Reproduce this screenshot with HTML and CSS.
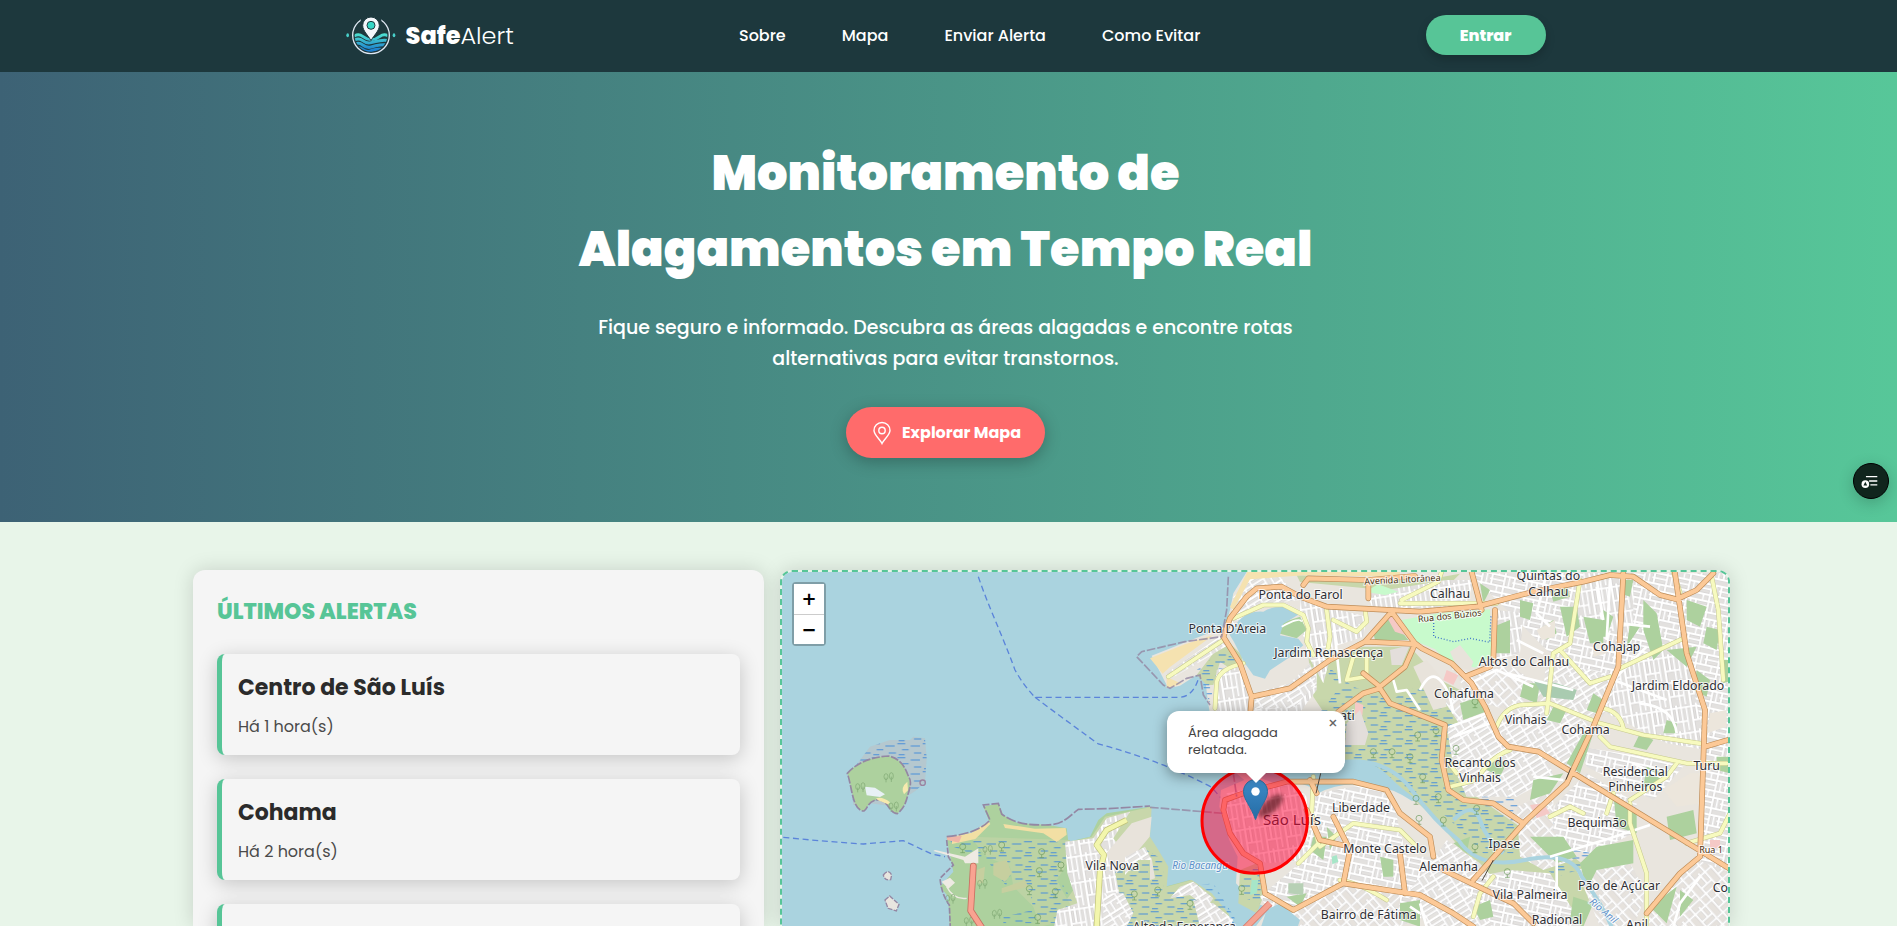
FILE: index.html
```html
<!DOCTYPE html>
<html lang="pt-BR">
<head>
<meta charset="utf-8">
<meta name="viewport" content="width=device-width, initial-scale=1">
<title>SafeAlert</title>
<link rel="stylesheet" href="styles.css">
</head>
<body>
<header class="topbar">
  <div class="topbar-inner">
    <a class="brand" href="#">
      <svg class="brand-icon" viewBox="0 0 150 120" aria-hidden="true">
        <defs>
          <linearGradient id="wave" x1="0" y1="55" x2="0" y2="105" gradientUnits="userSpaceOnUse"><stop offset="0" stop-color="#4fe3d0"/><stop offset="1" stop-color="#1c7fd0"/></linearGradient>
          <clipPath id="disc"><circle cx="75" cy="61" r="49"/></clipPath>
        </defs>
        <circle cx="75" cy="61" r="55" fill="none" stroke="#dfe8f3" stroke-width="4"/>
        <path d="M44 0h62v26H44z" fill="#1d383d"/>
        <g clip-path="url(#disc)" fill="none" stroke="url(#wave)" stroke-width="9">
          <path d="M24 64q13-10 26 0t26 10 26-10 26 0"/>
          <path d="M24 77q13-10 26 0t26 6 26-6 26 0"/>
          <path d="M24 90q13-10 26 0t26 6 26-6 26 0"/>
          <path d="M24 103q13-10 26 0t26 4 26-4 26 0"/>
        </g>
        <path d="M75 77C66 60 50 48 50 31a25 25 0 0 1 50 0c0 17-16 29-25 46z" fill="#f4f7fb" stroke="#1d383d" stroke-width="3"/>
        <circle cx="75" cy="31" r="12" fill="#35d6c6" stroke="#1d383d" stroke-width="3"/>
        <ellipse cx="5" cy="61" rx="4" ry="6" fill="#48cfc9"/><ellipse cx="144" cy="61" rx="4" ry="6" fill="#48cfc9"/>
      </svg>
      <span class="brand-name"><b>Safe</b>Alert</span>
    </a>
    <nav class="nav">
      <a href="#">Sobre</a><a href="#">Mapa</a><a href="#">Enviar Alerta</a><a href="#">Como Evitar</a>
    </nav>
    <button class="login" type="button">Entrar</button>
  </div>
</header>

<section class="hero">
  <h1>Monitoramento de<br>Alagamentos em Tempo Real</h1>
  <p>Fique seguro e informado. Descubra as áreas alagadas e encontre rotas alternativas para evitar transtornos.</p>
  <button class="explore" type="button">
    <svg viewBox="0 0 24 24" width="24" height="24" fill="none" stroke="currentColor" stroke-width="1.4" aria-hidden="true"><path d="M12 22.500C10 18 4 14 4 9.500a8 8 0 0 1 16 0C20 14 14 18 12 22.500z"/><circle cx="12" cy="9.500" r="3.200"/></svg>
    Explorar Mapa
  </button>
</section>

<main class="content">
  <section class="alerts">
    <h2>ÚLTIMOS ALERTAS</h2>
    <article class="alert"><h3>Centro de São Luís</h3><p>Há 1 hora(s)</p></article>
    <article class="alert"><h3>Cohama</h3><p>Há 2 hora(s)</p></article>
    <article class="alert"></article>
  </section>

  <section class="map" aria-label="Mapa">
    <svg class="tiles" viewBox="36 36 2838 1062" preserveAspectRatio="xMinYMin slice">
      <defs>
        <path id="s1" d="M0 3h68M0 18h44M0 35h68M6 0v35M44 0v52M25 35v17M58 3v32"/>
        <path id="s2" d="M0 3h84M0 19h84M0 34h50M10 0v48M50 3v45M70 19v29"/>
        <path id="s3" d="M3 0v78M18 0v50M32 0v78M47 10v68M0 8h60M3 50h44"/>
        <path id="s4" d="M0 4h76M0 22h40M0 44h76M10 0v66M40 4v40M60 4v62"/>
        <pattern id="st1" width="68" height="52" patternUnits="userSpaceOnUse" patternTransform="rotate(12)"><rect width="68" height="52" fill="#e3e1df"/><use href="#s1" class="street-case"/><use href="#s1" class="street"/></pattern>
        <pattern id="st2" width="84" height="48" patternUnits="userSpaceOnUse" patternTransform="rotate(-32)"><rect width="84" height="48" fill="#e5e3e0"/><use href="#s2" class="street-case"/><use href="#s2" class="street"/></pattern>
        <pattern id="st3" width="60" height="78" patternUnits="userSpaceOnUse" patternTransform="rotate(-9)"><rect width="60" height="78" fill="#e2e0de"/><use href="#s3" class="street-case"/><use href="#s3" class="street"/></pattern>
        <pattern id="st4" width="76" height="66" patternUnits="userSpaceOnUse" patternTransform="rotate(48)"><rect width="76" height="66" fill="#e6e2dd"/><use href="#s4" class="street-case"/><use href="#s4" class="street"/></pattern>
        <pattern id="marsh" width="76" height="42" patternUnits="userSpaceOnUse"><path d="M2 5h24M42 12h28M16 23h20M52 33h22M6 38h18" stroke="#4a90d9" stroke-width="3"/></pattern>
        <filter id="soft" x="-50%" y="-100%" width="200%" height="300%"><feGaussianBlur stdDeviation="7"/></filter>
        <g id="tree" fill="none" stroke="#6d9a5e" stroke-width="2"><circle cx="0" cy="0" r="9"/><path d="M0 9v9M-7 18h14"/></g>
        <g id="pines" fill="none" stroke="#7fa873" stroke-width="2"><ellipse cx="-7" cy="0" rx="6" ry="9"/><ellipse cx="9" cy="-2" rx="6" ry="10"/><path d="M-7 3v14M9 0v16"/></g>
        <path id="secondary" d="M345 445l5-80q10-40 80-55M205 350l165-110M400 175l90-40 60 0 60 30 15 40-5 40 20 40M680 150l10 80-10 60M700 180l70 35 30-30-5-40M740 360l20-70 40-10 0 70-60 10M905 120l70-35 40-20 10-30M900 130l290 0M1440 60l-30 190-50 30-20 180M1380 270l90 100 60-20M1560 325l190-90M1720 36l20 60M1835 50l20 100 15 210M1190 500q20-55 70-65l90-5 150 60 130 35 170 25M1510 445q50 10 60 60M1500 530l30 30 230 50 120 0M1230 570q-60 20-100 90l-80 20M1040 600l30 40M1590 730l0 60 50 150 0 160M1590 720l110-70 30-40M1350 770l60-30 40 20M1520 760l20-60M860 1020q-80-50-140-60M640 650l-5 110 20 90-60 60M660 860l100-70 140 20 60 60M1120 1070l20-70 40-50M1890 760l-30 60-100 30"/>
        <path id="primary" d="M370 230l20-55 50-65 30-25 75-5 55 30 80 30 280 15 170-15 170-45 150-30 80-20 70 5 80 55 50 13 60-28 50-50M370 230l50 80 35 100 115-25 120-85 105-55 80-90 70 95 20 15 90 45 60 60 40 70 40 90 30 30 90 15 90 55 490 300M455 410l-5 60M795 245l150 7-30 68-75 60-50-40M610 75l15-20 180 5 140-12M805 70v45M715 455l75-55 50-15 30 45 90 35 75 30-10 105 20 90 45 30 90 10 90 60M1570 40l-15 280-75 180-80 170-120 110-80 90-80 90M1725 40l35 240 55 170-5 150-10 290-60 50-100 120M1815 560l75-22M1185 150l-5 150M1115 36l30 114M1095 350l75-30M370 750l5-30 55-20 130-35 80 0 120 0 100 25 40 70 90 70 10 60M370 750l20 70 40 60 50 30 15 90 85 50 150-80 20-100-50-100M620 750l40 90 90 20M730 970l230 35 100 55 60 40M900 880l15 120M1030 930l210 100 60 60M630 660l20 40"/>
      </defs>
      <rect width="2900" height="1120" fill="#aad3df"/>

      <!-- western islands and peninsula -->
      <path d="M240 640l60-80 60-20 60 0 10-10 35 5 5 60-5 70-25 25-30 20-30 30-80-10-50 5z" fill="#b9c3c8" opacity=".7"/>
      <path d="M240 640l60-80 60-20 60 0 10-10 35 5 5 60-5 70-25 25-30 20-30 30-80-10-50 5z" fill="url(#marsh)"/>
      <path d="M232 640c30-35 80-50 125-52 40 10 50 40 60 65q10 10-3 50c-5 20-10 40-32 58-25 0-25-40-60-42-30 5-30 30-40 34-35 0-35-70-50-113z" fill="#add19e" stroke="#9487a3" stroke-width="5" stroke-dasharray="24 5"/>
      <path d="M285 680l30 3 30 20-15 8-40-5z" fill="#e8f1f5"/><path d="M412 665q-22 18-10 38l12-12zM318 715q20-6 42 12l-6 6-30-12z" fill="#f6e9ae"/>
      <circle cx="458" cy="668" r="8" fill="none" stroke="#9b83a0" stroke-width="4"/>
      <use href="#pines" x="355" y="650"/><use href="#pines" x="270" y="680"/><use href="#pines" x="370" y="738"/>
      <path d="M340 945q15-20 25 0l-3 14q-18 4-22-14zM345 1020l14-12 28 25-8 20-25-8z" fill="#e8e5df" stroke="#9487a3" stroke-width="4" stroke-dasharray="14 4"/>
      <path d="M530 835l80-15 50-30-20-50 45-10 15 35 45 25 90 5 55 10 5 40 65-15 25-50 25-20 130-20-5 90 25 40 30 50-5 60 75-20 60 40 50 60 20 60H540l-5-110-25-30 40-45z" fill="#add19e"/>
      <path d="M885 850l80-20 40-60 140-30-5 90 25 40 30 50-5 60 75-20 60 40 50 60 20 60H850l10-60 50-70z" fill="#c8d7ab"/>
      <path d="M600 830l300 10 0 60-40 60 50 90-10 30-90 20-20-60-60-60-10-60-70-30z" fill="#bcd3a4"/>
      <path d="M540 840l360 0 0 60-40 40 50 90-40 60H700l0-20 90-20-10-60-70-10-60-80-100-40z" fill="url(#marsh)"/>
      <path d="M1080 840l100 60 0 90 150-20 80 130H1010l-10-150z" fill="url(#marsh)"/>
      <path d="M545 830l60-12 50-34 6 8-45 45-70 15zM700 792l95 14 92-2 3 20-30 22-40-26-115-16z" fill="#f2dfa4"/>
      <path d="M885 845l85-10 40-60 70-20-50 80 30 40-25 60 20 100-10 65H852l10-50 60-20-30-90z" fill="url(#st3)"/>
      <path d="M1085 790l60-20-6 60-50 60-50 50-30-60zM1120 890l20 10 0 60 15-5-10-60z" fill="#e8e3db"/>
      <path d="M1065 890l60-30 20 40-40 0-40 45zM1230 980l40-15 60 50-20 30-50-40-60 10zM1000 1000l60 0 30 60-20 40h-70zM1270 1020l60 10 60 50-10 20h-90z" fill="url(#st2)"/>
      <path d="M530 830l45-2-8 20-35-8z" fill="#efb5a8"/>
      <path d="M495 870l90 20 40-25 0 45-40 0-5-10-90-27zM515 965l25-12 15 15-20 18z" fill="#eeeae3"/>
      <path d="M530 980q20 40 60 35" fill="none" stroke="#eeeae3" stroke-width="4"/>
      <path d="M670 910l40-10 15 40-20 25-35-20zM695 985l70-25 10 20-80 20zM620 930l25-10-5 50-20 0z" fill="#c6cf9f"/>
      <g><use href="#tree" x="578" y="860"/><use href="#tree" x="695" y="855"/><use href="#tree" x="815" y="875"/><use href="#tree" x="808" y="932"/><use href="#tree" x="856" y="994"/><use href="#tree" x="778" y="986"/><use href="#tree" x="803" y="1072"/><use href="#tree" x="873" y="915"/><use href="#tree" x="1093" y="1002"/><use href="#tree" x="1163" y="990"/><use href="#tree" x="1260" y="1030"/></g>
      <g><use href="#pines" x="652" y="868"/><use href="#pines" x="636" y="970"/><use href="#pines" x="680" y="1060"/><use href="#pines" x="540" y="1015"/><use href="#pines" x="596" y="1082"/></g>
      <path d="M530 830c60-5 110-25 130-50l-20-45 45-5 10 32c40 30 80 33 130 33s60-15 100-47l90-2 125-8" fill="none" stroke="#9487a3" stroke-width="5" stroke-dasharray="30 6"/>
      <path d="M530 840l5 50 15 25-40 40q5 50 28 80l3 70" fill="none" stroke="#9487a3" stroke-width="5" stroke-dasharray="18 5"/>
      <path d="M610 918l-8 134 38 58" fill="none" stroke="#c76f61" stroke-width="20" stroke-linejoin="round" stroke-linecap="round"/><path d="M610 918l-8 134 38 58" fill="none" stroke="#f9a391" stroke-width="15" stroke-linejoin="round" stroke-linecap="round"/>
      <path d="M980 1100l10-170 12-45-22-30 30-45 60-30" fill="none" stroke="#bfc27a" stroke-width="18" stroke-linejoin="round"/>
      <path d="M980 1100l10-170 12-45-22-30 30-45 60-30" fill="none" stroke="#f3f6ac" stroke-width="14" stroke-linejoin="round"/>
      <g fill="none" stroke="#5b84da" stroke-width="4" stroke-dasharray="18 11">
        <path d="M625 50c30 90 70 170 110 280q25 45 60 82h430q50 0 65-75M795 412q80 60 190 140 190 50 340 130l70 80"/>
        <path d="M40 832q120 12 240 20l120-10 85 40 40 8"/>
      </g>

      <g transform="translate(990 0)">
        <!-- mainland -->
        <path d="M440 36L400 100l-10 50-15 50-115 45-105 42 50 98 35-8 50-32 25 5 8 70 10 60 40 130 60 50-70 30-5 50 15 50 15 50 25 50-5 80 50 55 50 20-60 80H1900V36z" fill="#e9e5de"/>
        <!-- green spaces -->
        <g fill="#c8d7ab">
          <path d="M290 345l85-110 50 50 10 70-75-50-20 70-20 0z"/>
          <path d="M610 170l30 100 70 20 80-30 140 0 90 100 80 40 30 150-10 90 10 70 130 90 60 10 150 120 0 90-80 30-150-60-130-90-100-120-100-90-150-20-80 10 0-80 60-100-60-30-40-60z"/>
          <path d="M420 930l50-20 20 100-20 50-55-30z"/>
          <path d="M590 46l380 15 110-20-60 60-160-10-260-25z"/>
        </g>
        <path d="M620 270l100 110-70 90 90 120 120 60 180 120 110 110 120 0 100 70 130-40-80-110-160-70-80-50-10-110-10-70-90-60-120-60-80 40-110-40z" fill="url(#marsh)"/>
        <path d="M290 330l80-60 60 50-80 10-20 100zM425 930l60-10-5 110-60-20z" fill="url(#marsh)"/>
        <!-- residential fabric -->
        <path d="M400 110l50-55 90-5 60 70-90 10-60 30-60 60z" fill="url(#st2)"/>
        <path d="M200 340l165-115 20 30-110 65-70 40z" fill="url(#st2)"/>
        <path d="M350 330l75-20 25 100 140-40 60-60 0 80-60 80-30 10-220-10z" fill="url(#st3)"/>
        <path d="M460 400l110-30 60-60 20 60-70 75-130 0z" fill="url(#st2)"/>
        <path d="M600 110l80 30 120 30-10 60-90 30-30 110-50-90-20-100z" fill="url(#st3)"/>
        <path d="M800 100l240-40 80 0-20 80-280 10z" fill="url(#st3)"/>
        <path d="M380 700l190-40 50 50 10 190-130 10-100-60-20-80z" fill="url(#st3)"/>
        <path d="M650 700l170-30 60 60 40 160 80 0 0 170-130 50-330-10-60-90 130-110z" fill="url(#st1)"/>
        <path d="M690 990l130-20 80 30 0 100H590l-10-50z" fill="url(#st4)"/>
        <path d="M1000 900l40-60 100 70 100 120 80 70H980l-60-100z" fill="url(#st2)"/>
        <path d="M1110 40h790v230l-200 50-210 40-80-50-60-30z" fill="url(#st1)"/>
        <path d="M1040 300l80 50 100-40 120 80 20 60-100 10-110-30-60 80-60-90 60-40z" fill="url(#st4)"/>
        <path d="M1190 150l80 10-10 120-70 20z" fill="url(#st3)"/>
        <path d="M1450 40h150l0 180-180-20z" fill="url(#st3)"/>
        <path d="M1340 300l220 50-50 120-120-10-60-80zM1230 450l130-20 120 70-60 120-200-40-40-60z" fill="url(#st2)"/>
        <path d="M1560 320l190-90 50 150 20 190-120-20-180-90z" fill="url(#st3)"/>
        <path d="M1750 60h150v900h-100l10-440-40-180z" fill="url(#st1)"/>
        <path d="M1040 500l110-40 60 80 130 40 20 70-110 60-150 0-40-90z" fill="url(#st2)"/>
        <path d="M1440 560l190 30 120 30-90 100-200-100zM1360 740l100-100 150 90-10 90-120 60-120-20z" fill="url(#st1)"/>
        <path d="M1250 740l110-50 0 120 60 90-90 30-70-40zM1430 930l150-40 60 110-40 100h-100z" fill="url(#st4)"/>
        <path d="M1080 960l150-30 120 10 100 160h-270z" fill="url(#st1)"/>
        <path d="M1660 1020l130-120 110 40v160h-270z" fill="url(#st4)"/>
        <!-- parks -->
        <g fill="#add19e">
          <path d="M540 190l60-20 20 40-30 25-55-15zM1380 140l50 0 10 60-40 30zM1450 170l60 10 0 70-40 0zM1260 120l40 10-10 50-30-10zM1350 90l50-20 10 40-50 15zM1630 120l40 40 20 110-30 30-30-90zM1760 120l60 20-20 60-40-20zM1180 200l50-20 0 100-50 0zM820 220l45-55 60 75-100 0z"/>
          <path d="M1700 270l90-10-30 60zM1270 370l50 0-10 60-50-20zM1450 520l40-30-50 150-40-30zM1300 660l90-20-40 60-60 20zM1540 700l70 60 0 60-60-20zM1490 860l110-20 0 70-110 20-30 60-20-80zM1700 770l80-20 10 70-80 20zM1650 1040l80-60-30 110zM1080 430l60-20 30 40-80 30zM1620 200l-40 60 10-70z"/>
          <path d="M1290 830l100 0 40 60-60 20zM900 1030l60-10 0 80-60-20zM640 830l40 0-10 70-40-30zM1740 990l40 30-40 50zM1850 590l40 0 0 50-40-10zM1360 440l40 10-20 40-40-10zM1510 150l30 20-20 60-20 0zM1140 70l30 20-20 40zM1330 200l30-20 10 40-30 20zM1820 200l40 10-10 60-40-20zM1620 520l40 20-20 30-40-10zM1700 480l30 10 0 30-40 0zM1180 590l40 20-20 40-40-20zM1060 850l50-20-10 50z"/>
          <path d="M1480 400l30 20-20 40-30-10zM1790 330l40 30-10 50-40-20zM1640 620l50 20-20 50-40-10zM1420 1010l60 20-30 70-40-20zM1120 1040l50-20 10 50-40 10zM840 890l40 10 0 50-30 0zM560 1010l60-10-20 40zM1860 300l40 0 0 60-30 10zM1560 60l40 0-10 50-30-10zM680 800l30 30-20 40z"/>
        </g>
        <path d="M1300 360l70 10 60 20-10 30-90-10z" fill="#a9cbb0"/>
        <path d="M905 180l110-20 155-12 5 140-50 35-35-10-30 10-55-55-60-25zM795 95l40-22 60 22-40 10z" fill="#c8facc"/>
        <path d="M1001 180v50l60 15 50-10 58 12 4-80" fill="none" stroke="#3f74c9" stroke-width="4" stroke-dasharray="3 6"/>
        <path d="M1050 275l30-20 40 50-10 25-40-10zM940 320l40-20 50 60 10 80-40 10z" fill="#e8e3db"/>
        <path d="M1040 330l35 15-15 30-30-15zM860 170l25-5 30 60-30-10zM765 425l25 10-5 50-20 0zM1290 735l40-5 20 30-40 15zM1830 840l30 0 0 20-30 10z" fill="#f5c9c6"/>
        <path d="M740 490l40-40 25 70-10 35-60 0zM870 270l60-15-25 60-30 0z" fill="#e3dedb"/>
        <path d="M1310 210l55-30 0 50-40 10zM1830 460l50-10 0 50-60 20zM1690 690l80-50 30 0 0 90-70 10zM1480 250l40 0 0 30-40 10z" fill="#ece6dc"/>
        <path d="M565 970l45 0 0 35-45-5z" fill="#b7d0b5"/><path d="M695 890l15-5 5 20-18 8zM455 960l20 0-5 40-20 5z" fill="#a7e6c8"/>
        <!-- beaches -->
        <path d="M440 40l-50 100 10 10 50-92 160-12 290 4v-14H440zM150 295l105-42 85-28-130 96-22 20zM200 385l45-14-45-20z" fill="#f5e2b0"/>
        <!-- inner waters -->
        <path d="M490 155q20-15 60-14l50 20-50 30-10 35 55 10 15 20-40 35-60 40-15 25-35-10-28-40-30-60-15-25 30-40q30-30 73-26zM440 640q100-40 295-38 80-5 130 45t100 80l-30-5q-60-40-110-42-100-20-170 20-30-40-130-30zM500 1050l40-20 60 50-10 30H480z" fill="#aad3df"/>
        <path d="M735 605q130-10 200 85t140 150q60 90 200 60t170 50q60 80 90 150M1060 780q60-60 80 0t70 100" fill="none" stroke="#aad3df" stroke-width="12"/>
        <path d="M545 200q55-30 60-15" fill="none" stroke="#fff" stroke-width="5"/>
        <g><use href="#tree" x="820" y="575"/><use href="#tree" x="876" y="575"/><use href="#tree" x="930" y="590"/><use href="#tree" x="953" y="525"/><use href="#tree" x="1008" y="512"/><use href="#tree" x="968" y="650"/><use href="#tree" x="948" y="715"/><use href="#tree" x="1015" y="710"/><use href="#tree" x="1030" y="780"/><use href="#tree" x="1068" y="565"/><use href="#tree" x="1130" y="745"/><use href="#tree" x="1125" y="860"/><use href="#tree" x="1125" y="425"/><use href="#tree" x="425" y="985"/><use href="#tree" x="957" y="775"/><use href="#tree" x="1222" y="935"/></g>
        <!-- minor roads -->
        <g fill="none" stroke="#fff" stroke-width="8" stroke-linejoin="round">
          <path d="M880 360l10 35 30-5 40 60M960 390q30-60 60-30t40 100M1350 890l180-55 120-40M1370 890l0 90 30 40M1620 430q100 10 110 90M1800 950l-60 80-20 70M1050 500l110-40M1060 530l110-40M960 1030l20 70M1340 40l-30 120 40 40M1530 60l-10 180M1250 240l80 40M1640 260l-100 100 160 60M1220 340l200 50M700 180l20 190M1110 370l80-40 110 50M1300 650l90 10M1490 60l20 120M1560 190l90 10M1600 610l100 50M960 1060l-30-20"/>
        </g>
        <use href="#secondary" class="way yellow-case"/><use href="#secondary" class="way yellow"/>
        <use href="#primary" class="way orange-case"/><use href="#primary" class="way orange"/>
        <path d="M662 640l-14 60M1412 625l-14 34M1180 900l-34 62" stroke="#4d463f" stroke-width="3" fill="none"/>
        <path d="M510 1030l-80 80" stroke="#d87d6e" stroke-width="20"/><path d="M510 1030l-80 80" stroke="#f4a392" stroke-width="15"/>
        <path d="M385 50l-5 100-15 80-110 15-130 30-15 15 80 85 20 10 50-30 40-10 10 60 20 30M400 640l10 70M150 742l220 18" fill="none" stroke="#9487a3" stroke-width="5" stroke-dasharray="26 6" opacity=".8"/>
      </g>

      <g class="labels" transform="translate(990 0)">
        <text x="602" y="116">Ponta do Farol</text><text x="382" y="218">Ponta D'Areia</text><text x="686" y="292">Jardim Renascença</text>
        <text x="742" y="480">ati</text><text x="783" y="757">Liberdade</text><text x="855" y="878">Monte Castelo</text><text x="806" y="1077">Bairro de Fátima</text>
        <text x="37" y="929">Vila Nova</text><text x="253" y="1112">Alto da Esperança</text>
        <text x="1050" y="115">Calhau</text><text x="1345" y="61">Quintas do</text><text x="1345" y="107">Calhau</text><text x="1550" y="273">Cohajap</text>
        <text x="1272" y="319">Altos do Calhau</text><text x="1734" y="390">Jardim Eldorado</text><text x="1092" y="413">Cohafuma</text><text x="1277" y="493">Vinhais</text>
        <text x="1457" y="522">Cohama</text><text x="1140" y="621">Recanto dos</text><text x="1140" y="667">Vinhais</text><text x="1606" y="647">Residencial</text><text x="1606" y="694">Pinheiros</text>
        <text x="1820" y="630">Turu</text><text x="1491" y="801">Bequimão</text><text x="1213" y="864">Ipase</text><text x="1046" y="934">Alemanha</text><text x="1557" y="991">Pão de Açúcar</text>
        <text x="1290" y="1018">Vila Palmeira</text><text x="1371" y="1092">Radional</text><text x="1611" y="1108">Anil</text><text x="1861" y="996">Co</text>
        <text class="city" x="576" y="795">São Luís</text>
        <text class="road" x="908" y="68" transform="rotate(-3 908 68)">Avenida Litorânea</text><text class="road" x="1050" y="177" transform="rotate(-6 1050 177)">Rua dos Búzios</text><text class="road" x="1833" y="878">Rua 1</text>
        <text class="river" x="300" y="928">Rio Bacanga</text><text class="river" x="1504" y="1060" transform="rotate(40 1504 1060)">Rio Anil</text>
      </g>
      <circle cx="1454" cy="782" r="158" fill="#f03" fill-opacity=".5" stroke="#f00" stroke-width="9"/>
      <ellipse cx="1502" cy="737" rx="46" ry="19" transform="rotate(-42 1502 737)" fill="#200" opacity=".5" filter="url(#soft)"/>
    </svg>
    <div class="zoom"><button type="button" aria-label="Aumentar zoom">+</button><button type="button" aria-label="Diminuir zoom">−</button></div>
    <svg class="marker" viewBox="0 0 25 41" aria-hidden="true"><defs><linearGradient id="pin" x1="0" y1="0" x2="0" y2="1"><stop stop-color="#3d8bc8"/><stop offset="1" stop-color="#256ca5"/></linearGradient></defs><path d="M12.500.5C5.800.5.5 5.900.5 12.500c0 8 7 14 12 28 5-14 12-20 12-28C24.500 5.900 19.200.5 12.500.5z" fill="url(#pin)" stroke="#2b6e9f"/><circle cx="12.500" cy="12.500" r="4.200" fill="#fff"/></svg>
    <div class="popup" role="dialog">Área alagada relatada.<button type="button" aria-label="Fechar">×</button></div>
  </section>
</main>

<button class="fab" type="button" aria-label="Acessibilidade">
  <svg viewBox="0 0 54 54" aria-hidden="true"><path d="M19 20h18M24 27h13M26 33h11" stroke="#fff" stroke-width="2" fill="none"/><circle cx="18" cy="32" r="6" fill="#fff"/><path d="M15 34l3-6 3 6z" fill="#10251d"/></svg>
</button>
</body>
</html>
```
FILE: styles.css
```css
* { box-sizing: border-box; }

body {
  margin: 0;
  height: 100vh;
  overflow: hidden;
  display: flex;
  flex-direction: column;
  background: #e8f5e9;
  color: #2b2b2b;
  font-family: Poppins, Inter, "Open Sans", sans-serif;
}

h1, h2, h3, p { margin: 0; }
button { border: 0; padding: 0; font-family: inherit; cursor: pointer; }
a { color: inherit; text-decoration: none; }

.topbar { flex: none; background: #1d383d; color: #fff; padding: 0 6px 2px 0; }
.topbar-inner {
  height: 70px;
  max-width: 1200px;
  margin: 0 auto;
  display: flex;
  justify-content: space-between;
  align-items: center;
}
.brand { display: flex; align-items: center; gap: 10px; }
.brand-icon { width: 50px; height: 40px; }
.brand-name { font-size: 24px; font-weight: 300; }
.brand-name b { font-weight: 800; }
.nav { display: flex; gap: 56px; font-size: 16px; font-weight: 500; }
.login {
  width: 120px;
  height: 40px;
  border-radius: 20px;
  background: #57c597;
  color: #fff;
  font-size: 16px;
  font-weight: 800;
  box-shadow: 0 4px 10px rgba(0, 0, 0, .2);
}

.hero {
  flex: none;
  height: 450px;
  padding: 64px 6px 0 0;
  display: flex;
  flex-direction: column;
  align-items: center;
  text-align: center;
  color: #fff;
  background: linear-gradient(90deg, #3d6275, #57c799);
}
.hero h1 { font-size: 48px; line-height: 76px; font-weight: 900; }
.hero p { max-width: 720px; margin-top: 24px; font-size: 19px; line-height: 31px; font-weight: 500; }
.explore {
  margin-top: 33px;
  height: 51px;
  padding: 0 24px;
  display: flex;
  align-items: center;
  gap: 8px;
  border-radius: 26px;
  background: #ff6b6b;
  color: #fff;
  font-size: 16px;
  font-weight: 700;
  box-shadow: 0 4px 16px rgba(0, 0, 0, .25);
}

.content {
  flex: 1;
  min-height: 0;
  padding: 48px 167px 0 193px;
  display: grid;
  grid-template-columns: 571fr 950fr;
  gap: 16px;
}
.alerts {
  padding: 24px 24px 0;
  border-radius: 12px 12px 0 0;
  background: #f5f5f5;
  box-shadow: 0 0 20px rgba(0, 0, 0, .15);
  overflow: hidden;
}
.alerts h2 { font-size: 22px; line-height: 36px; font-weight: 800; color: #57c597; margin-bottom: 24px; }
.alert {
  height: 101px;
  margin-bottom: 24px;
  padding: 16px;
  border-left: 5px solid #57c597;
  border-radius: 8px;
  background: #f5f5f5;
  box-shadow: 0 4px 20px rgba(0, 0, 0, .2);
}
.alert h3 { font-size: 22px; line-height: 36px; font-weight: 700; }
.alert p { margin-top: 9px; font-size: 16px; line-height: 24px; color: #4a4a4a; }

.map {
  position: relative;
  min-height: 0;
  border: 2px dashed #57c597;
  border-bottom: 0;
  border-radius: 12px 12px 0 0;
  box-shadow: 0 0 20px rgba(0, 0, 0, .15);
  overflow: hidden;
}
.tiles { display: block; width: 100%; height: 100%; }
.street-case { stroke: #cfcdcd; stroke-width: 9px; }
.street { stroke: #fff; stroke-width: 6px; }
.way { fill: none; stroke-linejoin: round; stroke-linecap: round; }
.yellow-case { stroke: #c6c98c; stroke-width: 14px; }
.yellow { stroke: #f7fabf; stroke-width: 11px; }
.orange-case { stroke: #bf8d58; stroke-width: 17px; }
.orange { stroke: #fcc997; stroke-width: 13px; }
.labels text {
  font-family: "Noto Sans", sans-serif;
  font-size: 37px;
  text-anchor: middle;
  fill: #2f2f35;
  stroke: rgba(255, 255, 255, .75);
  stroke-width: 6px;
  paint-order: stroke;
}
.labels .city { font-size: 45px; }
.labels .road { font-size: 27px; fill: #4a2f12; }
.labels .river { font-size: 30px; font-style: italic; fill: #5b8fc9; }

.zoom {
  position: absolute;
  top: 10px;
  left: 10px;
  border: 2px solid rgba(0, 0, 0, .25);
  border-radius: 4px;
  background-clip: padding-box;
}
.zoom button {
  display: block;
  width: 30px;
  height: 30px;
  background: #fff;
  color: #000;
  font: bold 18px/30px "DejaVu Sans", sans-serif;
}
.zoom button + button { border-top: 1px solid #ccc; }
.marker { position: absolute; left: 461px; top: 207px; width: 25px; height: 41px; }
.popup {
  position: absolute;
  left: 385px;
  top: 139px;
  width: 178px;
  height: 62px;
  padding: 13px 50px 0 21px;
  border-radius: 12px;
  background: #fff;
  color: #444;
  font-size: 13px;
  line-height: 17px;
  box-shadow: 0 3px 14px rgba(0, 0, 0, .4);
}
.popup::after {
  content: "";
  position: absolute;
  left: 79px;
  top: 100%;
  border: 10px solid transparent;
  border-top-color: #fff;
  border-bottom: 0;
}
.popup button {
  position: absolute;
  top: 0;
  right: 0;
  width: 24px;
  height: 24px;
  background: none;
  color: #666;
  font-size: 16px;
}

.fab {
  position: fixed;
  right: 8px;
  top: 463px;
  width: 36px;
  height: 36px;
  border-radius: 50%;
  border: 1px solid #000;
  background: #10251d;
  box-shadow: 0 4px 16px rgba(0, 0, 0, .2);
}
.fab svg { display: block; width: 100%; height: 100%; }
```
